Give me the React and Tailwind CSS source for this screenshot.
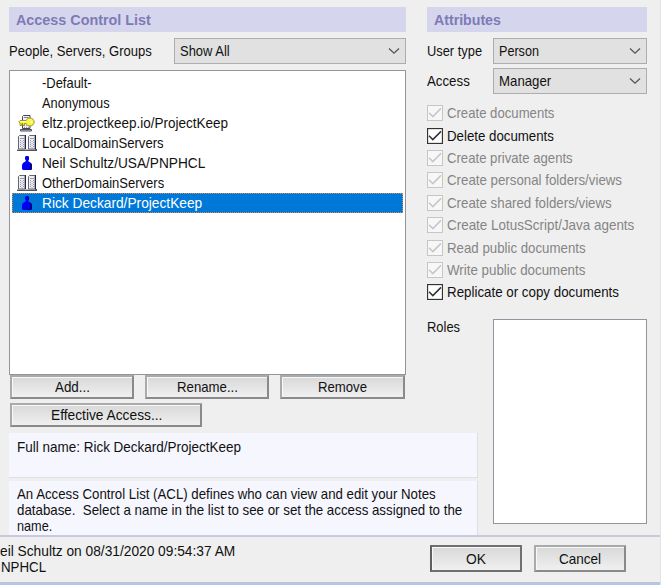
import React, { useLayoutEffect, useRef, useState } from "react";

// Single line of text, condensed horizontally to the given width.
function Text({ w, children, className = "" }) {
  const ref = useRef(null);
  const [scale, setScale] = useState(1);
  useLayoutEffect(() => {
    setScale(w / ref.current.offsetWidth);
  }, [w, children]);
  return (
    <span className={`block h-4 shrink-0 whitespace-pre leading-4 ${className}`} style={{ width: w }}>
      <span ref={ref} className="inline-block origin-left" style={{ transform: `scaleX(${scale})` }}>
        {children}
      </span>
    </span>
  );
}

function Heading({ w, children }) {
  return (
    <div className="flex h-[25px] items-center bg-[#d5d5ed] pl-[7px] text-[15px] font-bold text-[#7d7bb5]">
      <Text w={w}>{children}</Text>
    </div>
  );
}

function Select({ w, children, className }) {
  return (
    <div className={`flex h-[26px] shrink-0 items-center justify-between border border-[#adadad] bg-[#e1e1e1] pl-[5px] pr-[5px] ${className}`}>
      <Text w={w}>{children}</Text>
      <svg width="12" height="8" viewBox="0 0 12 8" fill="none" stroke="#555" strokeWidth="1.3">
        <path d="M1 1.5 6 6.2 11 1.5" />
      </svg>
    </div>
  );
}

function Button({ w, children, className }) {
  return (
    <button className={`flex h-6 shrink-0 items-center justify-center border-2 border-t-[#aaa] border-l-[#aaa] border-r-[#8a8a8a] border-b-[#8a8a8a] bg-linear-to-b from-[#d8d8d8] to-[#f0f0f0] shadow-[inset_1px_1px_0_#f8f8f8] ${className}`}>
      <Text w={w}>{children}</Text>
    </button>
  );
}

function Person() {
  return (
    <svg width="12" height="16" viewBox="0 0 12 16">
      <path d="M5 1h2l1 1v2l-1 2 3 2 1 2v4l-1 1H2l-1-1v-4l1-2 3-2-1-2V2z" fill="#0000f4" />
      <path d="M7 1.500 8 2v2L7 6zM9 8l1 0 1 2v4l-1 1H6v-1h3z" fill="#00008b" />
    </svg>
  );
}

function Servers() {
  return (
    <svg width="20" height="18" viewBox="0 0 20 18">
      <path d="M0 15h20v2H0z" fill="#55555f" />
      <path d="M0 15h18v1H0z" fill="#bbb" />
      {[1, 11].map((x) => (
        <g key={x}>
          <path d={`M${x + 0.5} 15V2.500l1-1h5.500v13.500z`} fill="#eeeef6" stroke="#666673" />
          <path d={`M${x + 7.5} 1v14`} stroke="#222238" />
          <path d={`M${x + 2} 4.500h4`} stroke="#999" />
          <path d={`M${x + 2.5} 6v8M${x + 5.5} 6v8`} stroke="#9898ac" strokeDasharray="1 1" />
          <path d={`M${x + 4} 6v8`} stroke="#aaaab8" strokeDasharray="1 1" strokeDashoffset="1" />
        </g>
      ))}
    </svg>
  );
}

function ServerKey() {
  return (
    <svg width="18" height="18" viewBox="0 0 18 18">
      <path d="M4.500 14.500V2.500l1-1h6.500v13z" fill="#eeeef6" stroke="#44445c" />
      <path d="M6 3.500h4.500" stroke="#888" />
      <path d="M6.500 11v3M8.500 11v3M10.500 11v3" stroke="#9898ac" strokeDasharray="1 1" />
      <path d="M2.500 15.500h11v1.500h-11z" fill="#ccc" stroke="#3c3c4c" strokeWidth=".9" />
      <path
        d="M1 7.500 2 6.500h6.200C8.800 4.900 10 4 11.800 4c2.500 0 4.400 1.800 4.400 4s-1.900 4-4.400 4c-1.700 0-3-.9-3.600-2.500H6.500v2H4.700v-2H3.800v2H2v-2.300z"
        fill="#f8f838"
        stroke="#8a7e10"
        strokeWidth=".8"
      />
      <path d="M2.500 7.500h6M10.500 6h2.500" stroke="#ffffc0" />
      <circle cx="13.600" cy="8" r="1" fill="#fff" />
    </svg>
  );
}

const entries = [
  ["-Default-", 50, null],
  ["Anonymous", 68, null],
  ["eltz.projectkeep.io/ProjectKeep", 186, ServerKey],
  ["LocalDomainServers", 122, Servers],
  ["Neil Schultz/USA/PNPHCL", 163, Person],
  ["OtherDomainServers", 122, Servers],
  ["Rick Deckard/ProjectKeep", 160, Person],
];

const permissions = [
  ["Create documents", 107, false],
  ["Delete documents", 107, true],
  ["Create private agents", 126, false],
  ["Create personal folders/views", 175, false],
  ["Create shared folders/views", 165, false],
  ["Create LotusScript/Java agents", 187, false],
  ["Read public documents", 139, false],
  ["Write public documents", 138, false],
  ["Replicate or copy documents", 172, true],
];

function Check({ enabled }) {
  return (
    <svg width="16" height="16" viewBox="0 0 16 16" className="shrink-0" fill="none" stroke={enabled ? "#333" : "#c6c6c6"}>
      <rect x=".5" y=".5" width="15" height="15" fill={enabled ? "#fff" : "#f7f7f7"} strokeWidth={enabled ? 1.3 : 1} />
      <path d="M2 7.800 5.800 11.600 14 3.400" strokeWidth="1.500" />
    </svg>
  );
}

export default function App() {
  return (
    <div className="flex h-[585px] w-[661px] flex-col overflow-hidden border-r border-[#e3e3e3] bg-[#efefef] font-['Liberation_Sans',Arial,sans-serif] text-[14.5px] text-[#111]">
      <main className="flex h-[535px] shrink-0 pl-[9px] pt-[7px]">
        <section className="mr-[21px] flex w-[397px] shrink-0 flex-col">
          <Heading w={135}>Access Control List</Heading>
          <div className="mt-[6px] flex items-center justify-between">
            <Text w={143}>People, Servers, Groups</Text>
            <Select w={50} className="w-[232px]">Show All</Select>
          </div>
          <div className="mt-[6px] h-[305px] shrink-0 border border-[#90959f] bg-white px-[2px] pt-[2px]">
            {entries.map(([name, w, Icon], i) => (
              <div
                key={name}
                className={`flex h-5 items-center ${i === 6 ? "bg-[#0078d7] text-white outline-1 -outline-offset-1 outline-dotted outline-[#d88950]" : ""}`}
              >
                <span className="flex w-[30px] shrink-0 items-center justify-center">{Icon && <Icon />}</span>
                <Text w={w}>{name}</Text>
              </div>
            ))}
          </div>
          <div className="flex gap-[11px] pl-px">
            <Button w={35} className="w-[124px]">Add...</Button>
            <Button w={61} className="w-[124px]">Rename...</Button>
            <Button w={49} className="w-[125px]">Remove</Button>
          </div>
          <Button w={111} className="ml-px mt-1 w-48">Effective Access...</Button>
          <div className="mt-[6px] h-[45px] w-[469px] shrink-0 border-b border-r border-[#dedee4] bg-[#f6f6ff] pl-2 pt-[6px]">
            <Text w={224}>Full name: Rick Deckard/ProjectKeep</Text>
          </div>
          <div className="mt-[3px] h-[54px] w-[469px] shrink-0 border-r border-[#dedee4] bg-[#f6f6ff] pl-2 pt-[5px]">
            <Text w={419}>An Access Control List (ACL) defines who can view and edit your Notes</Text>
            <Text w={445}>{"database.  Select a name in the list to see or set the access assigned to the"}</Text>
            <Text w={35}>name.</Text>
          </div>
        </section>
        <section className="flex w-[220px] shrink-0 flex-col">
          <Heading w={67}>Attributes</Heading>
          <div className="mt-[6px] flex items-center justify-between">
            <Text w={55}>User type</Text>
            <Select w={40} className="w-[154px]">Person</Select>
          </div>
          <div className="mt-1 flex items-center justify-between">
            <Text w={43}>Access</Text>
            <Select w={52} className="w-[154px]">Manager</Select>
          </div>
          <div className="mt-2 flex flex-col">
            {permissions.map(([name, w, enabled]) => (
              <div key={name} className={`flex h-[22.4px] items-center gap-1 ${enabled ? "text-[#111]" : "text-[#858585]"}`}>
                <Check enabled={enabled} />
                <Text w={w}>{name}</Text>
              </div>
            ))}
          </div>
          <div className="mt-[15px] flex items-start justify-between">
            <Text w={33}>Roles</Text>
            <div className="h-[205px] w-[154px] border border-[#90959f] bg-white" />
          </div>
        </section>
      </main>
      <footer className="flex h-[47px] shrink-0 border-t-2 border-[#cbc9df]">
        <div className="w-[430px] pt-[6px]">
          <Text w={235}>eil Schultz on 08/31/2020 09:54:37 AM</Text>
          <Text w={45} className="ml-px">NPHCL</Text>
        </div>
        <div className="flex gap-[12px] pt-2">
          <Button w={20} className="h-[27px] w-[92px] border-t-[#707070]! border-l-[#606060]! border-r-[#707070]! border-b-[#707070]!">OK</Button>
          <Button w={42} className="h-[27px] w-[92px]">Cancel</Button>
        </div>
      </footer>
      <div className="h-[3px] shrink-0 bg-[#b5c7de]" />
    </div>
  );
}
